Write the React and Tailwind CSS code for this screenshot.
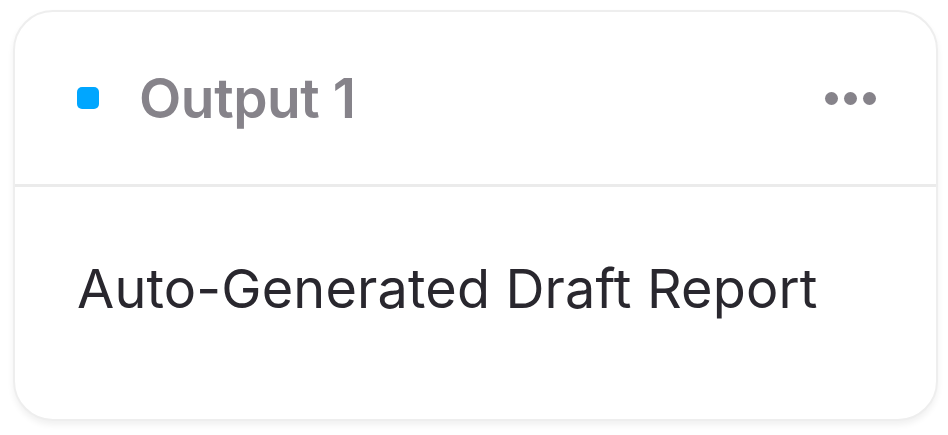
export default function App() {
  return (
    <div className="w-[948px] h-[435px] bg-white pt-[10px] pl-[13px]">
      <div className="w-[925px] h-[411px] rounded-[40px] border-2 border-[#eeeeee] bg-white shadow-[0_4px_6px_rgba(0,0,0,0.06)] overflow-hidden flex flex-col">
        <div className="h-[172px] flex items-center pl-[62px] pr-[60px]">
          <div className="w-[22px] h-[22px] rounded-[5px] bg-[#00a6ff]" />
          <span className="ml-[40px] text-[55px] leading-none font-semibold text-[#86838a] tracking-[-0.4px] font-['Inter',sans-serif]">
            Output 1
          </span>
          <div className="ml-auto flex items-center gap-[6px]">
            <span className="w-[13px] h-[13px] rounded-full bg-[#86838a]" />
            <span className="w-[13px] h-[13px] rounded-full bg-[#86838a]" />
            <span className="w-[13px] h-[13px] rounded-full bg-[#86838a]" />
          </div>
        </div>
        <div className="h-[3px] bg-[#ebebeb]" />
        <div className="pl-[62px] pt-[75px]">
          <p className="text-[54px] leading-[54px] text-[#29272e] tracking-[0.15px] font-['Inter',sans-serif]">
            Auto-Generated Draft Report
          </p>
        </div>
      </div>
    </div>
  );
}
